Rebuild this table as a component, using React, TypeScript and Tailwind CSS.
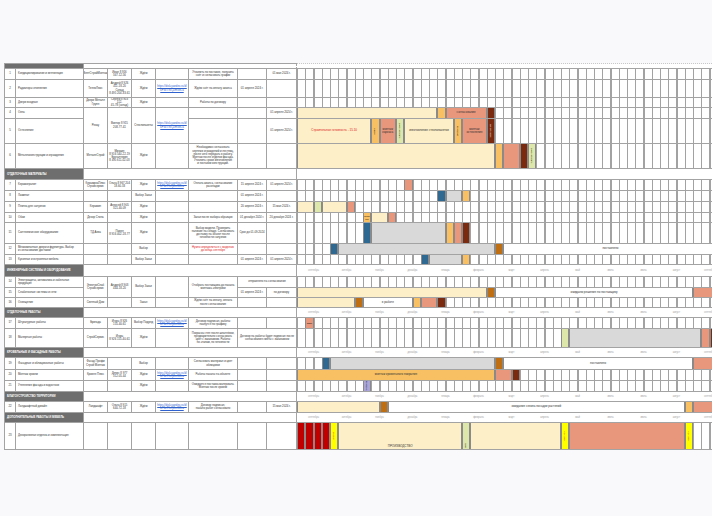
import React from "react";

const CW = 8.25;
const COLS = 51;

// segment fills
const Y = "bg-[#fdefc8]";
const O = "bg-[#f8c063]";
const S = "bg-[#e8977c]";
const B = "bg-[#7a2b0f] text-white";
const G = "bg-[#dde7a9]";
const BL = "bg-[#2f6891]";
const GR = "bg-[#d9d9d9]";
const DO = "bg-[#bf6f12]";
const L = "bg-[#aaa6d8]";
const R = "bg-[#c00000]";
const YY = "bg-[#ffff00] text-[#e00000]";
const WH = "bg-white";

type Seg = { s: number; e: number; c: string; t?: string; v?: boolean; red?: boolean; low?: boolean; tiny?: boolean };
type Cell = { t?: string; rs?: number; cs?: number; bg?: string; link?: boolean; red?: boolean };
type DataRow = { h: number; n: string; nb?: string; name: string; namebg?: string; cells: (Cell | string)[]; segs: Seg[] };
type Section = { section: string; h: number; months?: boolean; top?: boolean };

const LINK = "https://disk.yandex.ru/d/ kP3xT9sQ2mWfLa";

const rows: (DataRow | Section)[] = [
  { section: "", h: 5, top: true },
  {
    h: 11, n: "1", name: "Кондиционирование и вентиляция",
    cells: ["ВентСтройМонтаж", "Иван 8 916\n347-12-56", "Ждём", "", "Уточнить по поставке, получить\nсчёт и согласовать график", "", "01 мая 2024 г."],
    segs: [],
  },
  {
    h: 18, n: "2", name: "Радиаторы отопления",
    cells: ["ТеплоЛюкс", "Андрей 8 926\n411-18-20\nСклад\n8 495 204-33-61", "Ждём", { t: LINK, link: true }, "Ждём счёт на оплату аванса", "01 апреля 2024 г.", ""],
    segs: [],
  },
  {
    h: 10, n: "3", name: "Двери входные", namebg: "bg-[#dcebd5]",
    cells: ["Двери Металл Групп", "Сергей 8 903 112-\n45-78 (склад)", "Ждём", "", "Работы по договору", "", ""],
    segs: [],
  },
  {
    h: 11, n: "4", name: "Окна",
    cells: [{ t: "Рехау", rs: 2 }, { t: "Виктор 8 915\n208-77-41", rs: 2 }, { t: "Стеклопакеты", rs: 2 }, { t: LINK, link: true, rs: 2 }, "", "", "01 апреля 2024 г."],
    segs: [{ s: 0, e: 17, c: Y }, { s: 17, e: 18, c: O }, { s: 18, e: 23, c: S, t: "согласование" }, { s: 23, e: 24, c: B }],
  },
  {
    h: 25, n: "5", nb: "bg-[#1ea6e3]", name: "Остекление",
    cells: ["", "", "01 апреля 2024 г."],
    segs: [
      { s: 0, e: 9, c: Y, t: "Строительная готовность - 15.10", red: true },
      { s: 9, e: 10, c: O, t: "замер", v: true },
      { s: 10, e: 12, c: S, t: "монтаж\nкаркаса" },
      { s: 12, e: 13, c: G, t: "приёмка работ", v: true },
      { s: 13, e: 19, c: Y, t: "изготовление стеклопакетов" },
      { s: 19, e: 20, c: O, t: "доставка", v: true },
      { s: 20, e: 23, c: S, t: "монтаж\nостекления" },
      { s: 23, e: 24, c: B, t: "завершение", v: true },
    ],
  },
  {
    h: 25, n: "6", name: "Металлоконструкции и ограждения",
    cells: ["МеталлСтрой", "Михаил\n8 916 540-22-19\nБухгалтерия\n8 495 611-02-03", "Ждём", "", "Необходимо согласовать\nчертежи ограждений и лестниц,\nпосле чего передать в работу.\nМонтаж после отделки фасада.\nУточнить сроки изготовления\nи поставки конструкций.", "", ""],
    segs: [{ s: 0, e: 24, c: Y }, { s: 24, e: 25, c: O }, { s: 25, e: 27, c: S }, { s: 27, e: 28, c: B }, { s: 28, e: 29, c: G, t: "приёмка работ", v: true }],
  },
  { section: "Отделочные материалы", h: 11 },
  {
    h: 11, n: "7", name: "Керамогранит",
    cells: ["КерамикаПлюс Стройсервис", "Ольга 8 967 204\n18-60-33", "Ждём", { t: LINK, link: true }, "Оплата аванса, согласование\nраскладки", "15 апреля 2024 г.", "01 апреля 2024 г."],
    segs: [{ s: 13, e: 14, c: S }],
  },
  {
    h: 11, n: "8", name: "Ламинат",
    cells: ["", "", "Выбор Заказ", "", "", "01 апреля 2024 г.", { t: "", bg: "bg-[#ffff00]" }],
    segs: [{ s: 17, e: 18, c: BL }, { s: 18, e: 20, c: GR }, { s: 20, e: 21, c: O }],
  },
  {
    h: 11, n: "9", name: "Плитка для санузлов",
    cells: ["Керамин", "Алексей 8 905\n321-40-09", "Ждём", "", "", "20 апреля 2024 г.", "15 мая 2024 г."],
    segs: [{ s: 0, e: 2, c: Y }, { s: 2, e: 3, c: G }, { s: 3, e: 6, c: Y }, { s: 6, e: 7, c: S }],
  },
  {
    h: 10, n: "10", name: "Обои",
    cells: ["Декор Стиль", "", "Ждём", "", "Заказ после выбора образцов", "01 декабря 2024 г.", "20 декабря 2024 г."],
    segs: [{ s: 8, e: 9, c: O, t: "выбор\nобр.", tiny: true }, { s: 9, e: 11, c: Y }, { s: 11, e: 12, c: S }],
  },
  {
    h: 21, n: "11", nb: "bg-[#1ea6e3]", name: "Сантехническое оборудование",
    cells: ["ТД Аква", "Павел\n8 916 402-18-77", "Ждём", "", "Выбор модели. Проверить\nналичие на складе. Согласовать\nдоставку на объект после\nготовности санузлов", "Срок до 01.09.2024", ""],
    segs: [{ s: 8, e: 9, c: BL }, { s: 9, e: 18, c: GR }, { s: 18, e: 19, c: O }, { s: 19, e: 20, c: S }, { s: 20, e: 21, c: B }],
  },
  {
    h: 11, n: "12", name: "Межкомнатные двери и фурнитура. Выбор\nи согласование доставки",
    cells: ["", "", "Выбор", "", { t: "Нужно определиться с моделью\nдо конца сентября", red: true }, "", ""],
    segs: [{ s: 4, e: 5, c: BL }, { s: 5, e: 24, c: GR }, { s: 24, e: 25, c: DO }, { s: 25, e: COLS, c: WH, t: "поставлено" }],
  },
  {
    h: 10, n: "13", name: "Кухонная и встроенная мебель",
    cells: ["", "", "Выбор Заказ", "", "", "01 апреля 2024 г.", "01 апреля 2024 г."],
    segs: [{ s: 15, e: 16, c: BL }, { s: 16, e: 20, c: GR }, { s: 20, e: 21, c: O }],
  },
  { section: "Инженерные системы и оборудование", h: 12, months: true },
  {
    h: 11, n: "14", name: "Электрощиты, автоматика и кабельная\nпродукция",
    cells: [
      { t: "ЭлектроСнаб Стройсервис", rs: 2 }, { t: "Андрей 8 903\n444-18-20", rs: 2 }, { t: "Выбор Заказ", rs: 2 }, { t: "", rs: 2 },
      { t: "Отобрать поставщика до начала\nмонтажа электрики", rs: 2, bg: "bg-[#ffff00]" }, { t: "отправлено на согласование", cs: 2 },
    ],
    segs: [],
  },
  {
    h: 10, n: "15", name: "Слаботочные системы и сети",
    cells: ["01 апреля 2024 г.", "по договору"],
    segs: [{ s: 0, e: 23, c: Y }, { s: 23, e: 24, c: DO }, { s: 24, e: 48, c: WH, t: "ожидаем решения по поставщику" }, { s: 48, e: COLS, c: S }],
  },
  {
    h: 10, n: "16", nb: "bg-[#1ea6e3]", name: "Освещение",
    cells: ["Светлый Дом", "", "Заказ", "", "Ждём счёт на оплату, оплата\nпосле согласования", "", ""],
    segs: [{ s: 0, e: 7, c: Y }, { s: 7, e: 8, c: DO }, { s: 8, e: 14, c: WH, t: "в работе" }, { s: 14, e: 15, c: O }, { s: 15, e: 17, c: S }, { s: 17, e: 18, c: B }],
  },
  { section: "Отделочные работы", h: 10, months: true },
  {
    h: 11, n: "17", name: "Штукатурные работы",
    cells: ["Бригада", "Игорь 8 926\n155-40-61", "Выбор Подряд", { t: LINK, link: true }, "Договор подписан, работы\nначнутся по графику", "", ""],
    segs: [{ s: 1, e: 2, c: S, t: "замер", tiny: true }],
  },
  {
    h: 19, n: "18", nb: "bg-[#1ea6e3]", name: "Малярные работы",
    cells: ["СтройСервис", "Игорь\n8 926 155-40-61", "Ждём", "", "Покраска стен после шпатлёвки,\nпредварительно согласовать\nцвет с заказчиком. Работы\nпо этапам, по готовности", { t: "Договор на работы будет подписан после\nсогласования сметы с заказчиком", cs: 2 }],
    segs: [{ s: 32, e: 33, c: G }, { s: 33, e: 49, c: GR }, { s: 49, e: 50, c: S }, { s: 50, e: COLS, c: B }],
  },
  { section: "Кровельные и фасадные работы", h: 10, months: true },
  {
    h: 12, n: "19", name: "Фасадные и облицовочные работы",
    cells: ["Фасад Профи\nСтрой Монтаж", "", "Выбор", "", "Согласовать материал и цвет\nоблицовки", "", ""],
    segs: [{ s: 3, e: 4, c: BL }, { s: 4, e: 24, c: GR }, { s: 24, e: 25, c: DO }, { s: 25, e: 48, c: WH, t: "поставлено" }, { s: 48, e: COLS, c: S }],
  },
  {
    h: 11, n: "20", name: "Монтаж кровли",
    cells: ["Кровля Плюс", "Денис 8 977\n312-05-44", "Ждём", { t: LINK, link: true }, "Работы начаты на объекте", "", ""],
    segs: [{ s: 0, e: 24, c: O, t: "монтаж кровельного покрытия" }, { s: 24, e: 26, c: S }, { s: 26, e: 27, c: B }],
  },
  {
    h: 11, n: "21", nb: "bg-[#1ea6e3]", name: "Утепление фасада и водостоки",
    cells: ["", "", "Ждём", "", "Ожидается поставка материала.\nМонтаж после кровли", "", ""],
    segs: [{ s: 8, e: 9, c: L, t: "поставка", v: true }],
  },
  { section: "Благоустройство территории", h: 10, months: true },
  {
    h: 11, n: "22", name: "Ландшафтный дизайн",
    cells: ["Ландшафт", "Ольга 8 915\n640-72-18", "Ждём", { t: LINK, link: true }, "Договор подписан,\nначало работ согласовано", "", "15 мая 2024 г."],
    segs: [{ s: 0, e: 10, c: Y }, { s: 10, e: 11, c: DO }, { s: 11, e: 47, c: WH, t: "ожидание сезона посадки растений" }, { s: 47, e: 48, c: O }, { s: 48, e: COLS, c: S }],
  },
  { section: "Дополнительные работы и мебель", h: 10, months: true },
  {
    h: 27, n: "23", name: "Декоративная отделка и комплектация",
    cells: ["", "", "", "", "", "", ""],
    segs: [
      { s: 0, e: 1, c: R }, { s: 1, e: 2, c: R }, { s: 2, e: 3, c: R }, { s: 3, e: 4, c: R },
      { s: 4, e: 5, c: YY, t: "ЗАКАЗ", v: true },
      { s: 5, e: 20, c: Y, t: "ПРОИЗВОДСТВО", low: true },
      { s: 20, e: 21, c: G, t: "ОТК", v: true, low: true },
      { s: 21, e: 32, c: Y },
      { s: 32, e: 33, c: YY, t: "ОПЛАТА", v: true },
      { s: 33, e: 47, c: S },
      { s: 47, e: 48, c: YY, t: "ОПЛАТА", v: true },
    ],
  },
];

const MONTHS = ["сентябрь", "октябрь", "ноябрь", "декабрь", "январь", "февраль", "март", "апрель", "май", "июнь", "июль", "август", "сентябрь"];

const TD = "p-0 border border-[#a3a3a3] bg-white align-middle";
const BOX = "flex items-center justify-center overflow-hidden px-[1px] text-center text-[2.8px] leading-[1.15] text-[#333] whitespace-pre-line";
const GRID = "bg-[repeating-linear-gradient(to_right,#a2a2a2_0_1px,transparent_1px_8.25px)]";

function Gantt({ h, segs }: { h: number; segs: Seg[] }) {
  const items: React.ReactNode[] = [];
  let pos = 0;
  segs.forEach((g, i) => {
    if (g.s > pos) items.push(<div key={"sp" + i} className="shrink-0" style={{ width: (g.s - pos) * CW }} />);
    const txt = g.v
      ? "[writing-mode:vertical-rl] rotate-180 text-[2.4px] whitespace-nowrap"
      : g.tiny
        ? "text-[1.9px] whitespace-pre-line"
        : `text-[3px] px-[1px] whitespace-pre-line ${g.red ? "text-[#e02020]" : "text-[#333]"}`;
    items.push(
      <div
        key={i}
        className={`shrink-0 flex justify-center overflow-hidden border-x border-[#8a8a8a] text-center leading-[1.1] ${g.low ? "items-end pb-[1px]" : "items-center"} ${g.c}`}
        style={{ width: (g.e - g.s) * CW }}
      >
        {g.t && <span className={txt}>{g.t}</span>}
      </div>
    );
    pos = g.e;
  });
  return (
    <div className={`flex overflow-hidden ${GRID}`} style={{ height: h - 1, width: COLS * CW }}>
      {items}
    </div>
  );
}

function SectionRow({ r }: { r: Section }) {
  return (
    <tr style={{ height: r.h }}>
      <td colSpan={2} className="p-0 border border-[#a3a3a3] bg-[#6e6e6e]">
        <div className="flex items-center overflow-hidden pl-[2px] text-[2.8px] font-bold uppercase text-white whitespace-nowrap" style={{ height: r.h - 1 }}>
          {r.section}
        </div>
      </td>
      <td colSpan={7} className="p-0 border-y border-[#a3a3a3] bg-white" />
      <td className={`p-0 border-l border-y bg-white ${r.top ? "border-t-[#c8c8c8] border-dotted border-[#a3a3a3]" : "border-[#a3a3a3]"}`}>
        <div className="flex items-center overflow-hidden text-[2.6px] text-[#a0a0a0]" style={{ width: COLS * CW, height: r.h - 1 }}>
          {r.months &&
            MONTHS.map((m, i) => (
              <span key={i} className="w-[33px] shrink-0 text-center">
                {m}
              </span>
            ))}
        </div>
      </td>
    </tr>
  );
}

function ItemRow({ r, idx }: { r: DataRow; idx: number }) {
  const spanH = (rs = 1) => {
    let h = 0;
    for (let k = 0; k < rs; k++) h += rows[idx + k].h;
    return h - 1;
  };
  return (
    <tr style={{ height: r.h }}>
      <td className={`${TD} ${r.nb ?? ""}`}>
        <div className={BOX} style={{ height: r.h - 1 }}>{r.n}</div>
      </td>
      <td className={`${TD} ${r.namebg ?? ""}`}>
        <div className={`${BOX} !justify-start !text-left pl-[2px]`} style={{ height: r.h - 1 }}>{r.name}</div>
      </td>
      {r.cells.map((c, i) => {
        const cell: Cell = typeof c === "string" ? { t: c } : c;
        return (
          <td key={i} rowSpan={cell.rs} colSpan={cell.cs} className={`${TD} ${cell.bg ?? ""}`}>
            <div
              className={`${BOX} ${cell.link ? "!text-[#2f62cf] underline break-all" : ""} ${cell.red ? "!text-[#e02020]" : ""}`}
              style={{ height: spanH(cell.rs) }}
            >
              {cell.t}
            </div>
          </td>
        );
      })}
      <td className="p-0 border border-[#a3a3a3] bg-white align-top">
        <Gantt h={r.h} segs={r.segs} />
      </td>
    </tr>
  );
}

export default function App() {
  return (
    <div className="w-[712px] h-[516px] overflow-hidden bg-[#f9f9fb] pt-[63px] pl-[4px] font-['Liberation_Sans',Arial,sans-serif]">
      <table className="table-fixed border-collapse w-[713px]">
        <colgroup>
          <col className="w-[11px]" />
          <col className="w-[68px]" />
          <col className="w-[24px]" />
          <col className="w-[24px]" />
          <col className="w-[24px]" />
          <col className="w-[33px]" />
          <col className="w-[49px]" />
          <col className="w-[29px]" />
          <col className="w-[30px]" />
          <col className="w-[421px]" />
        </colgroup>
        <tbody>
          {rows.map((r, i) =>
            "section" in r ? <SectionRow key={i} r={r} /> : <ItemRow key={i} r={r} idx={i} />
          )}
        </tbody>
      </table>
    </div>
  );
}
